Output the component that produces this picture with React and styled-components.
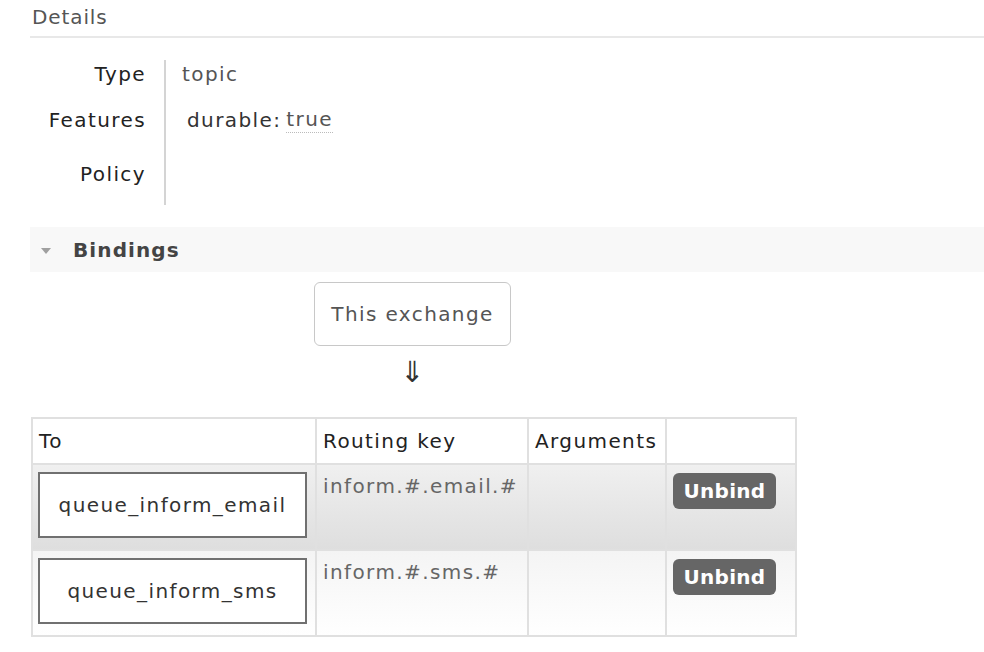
import React from 'react';
import styled, { createGlobalStyle } from 'styled-components';

const GlobalStyle = createGlobalStyle`
  html, body {
    margin: 0;
    padding: 0;
    background: #fff;
  }
  body {
    font-family: "DejaVu Sans", Verdana, sans-serif;
    font-size: 20px;
    letter-spacing: 1.4px;
    color: #333;
  }
`;

const Page = styled.div`
  padding-left: 30px;
  width: 954px;
`;

const Heading = styled.h2`
  margin: 0;
  height: 38px;
  padding: 5px 0 0 2px;
  box-sizing: border-box;
  font-size: 20px;
  letter-spacing: 0.9px;
  font-weight: normal;
  color: #555;
  border-bottom: 2px solid #e8e8e8;
`;

const Facts = styled.div`
  display: grid;
  grid-template-columns: 134px 2px auto;
  grid-template-rows: 28px 60px 57px;
  margin: 22px 0 0 0;
  width: 400px;
`;

const Label = styled.div`
  grid-column: 1;
  display: flex;
  align-items: center;
  justify-content: flex-end;
  padding-right: 18px;
  color: #222;
  padding-top: ${(p) => p.$top || 0}px;
  padding-bottom: ${(p) => p.$bottom || 0}px;
`;

const Divider = styled.div`
  grid-column: 2;
  grid-row: 1 / 4;
  background: #d4d4d4;
`;

const Value = styled.div`
  grid-column: 3;
  display: flex;
  align-items: center;
  color: #555;
  padding-left: ${(p) => p.$indent || 16}px;
  padding-top: ${(p) => p.$top || 0}px;
`;

const Key = styled.span`
  color: #333;
  margin-right: 5px;
`;

const Dotted = styled.span`
  color: #555;
  border-bottom: 1px dotted #bbb;
  line-height: 25px;
`;

const SectionBar = styled.div`
  margin-top: 22px;
  height: 45px;
  background: #f8f8f8;
  display: flex;
  align-items: center;
  padding-left: 11px;
  gap: 22px;
  font-weight: bold;
  letter-spacing: 1.1px;
  color: #444;
`;

const Triangle = styled.span`
  width: 0;
  height: 0;
  border-left: 5px solid transparent;
  border-right: 5px solid transparent;
  border-top: 6px solid #a0a0a0;
  margin-top: 2px;
`;

const Diagram = styled.div`
  display: flex;
  flex-direction: column;
  align-items: center;
  width: 765px;
  margin-top: 10px;
`;

const ExchangeBox = styled.div`
  width: 197px;
  height: 64px;
  box-sizing: border-box;
  border: 1px solid #c8c8c8;
  border-radius: 6px;
  display: flex;
  align-items: center;
  justify-content: center;
  color: #555;
`;

const Arrow = styled.div`
  font-size: 29px;
  line-height: 32px;
  height: 36px;
  margin-top: 10px;
  letter-spacing: 0;
  color: #333;
`;

const Table = styled.table`
  border-collapse: collapse;
  margin-left: 1px;
  margin-top: 25px;
`;

const Th = styled.th`
  border: 2px solid #e0e0e0;
  height: 46px;
  padding: 0 6px;
  text-align: left;
  font-weight: normal;
  color: #222;
  width: ${(p) => p.$w}px;
  box-sizing: border-box;
`;

const Row = styled.tr`
  background: ${(p) =>
    p.$alt
      ? 'linear-gradient(#f0f0f0, #dedede)'
      : 'linear-gradient(#f4f4f4, #ffffff)'};
`;

const Td = styled.td`
  border: 2px solid #e0e0e0;
  height: 86px;
  padding: 9px 6px;
  vertical-align: top;
  box-sizing: border-box;
  color: #666;
`;

const QueueCell = styled(Td)`
  padding: 7px 6px 0 5px;
`;

const QueueBox = styled.div`
  width: 269px;
  height: 66px;
  box-sizing: border-box;
  border: 2px solid #707070;
  background: #fff;
  display: flex;
  align-items: center;
  justify-content: center;
  color: #333;
`;

const ButtonCell = styled(Td)`
  padding-top: 8px;
`;

const UnbindButton = styled.button`
  font-family: inherit;
  font-size: 20px;
  letter-spacing: 0.3px;
  font-weight: bold;
  color: #fff;
  background: #666;
  border: none;
  border-radius: 6px;
  height: 36px;
  width: 103px;
  padding: 0;
  cursor: pointer;
`;

const bindings = [
  { queue: 'queue_inform_email', key: 'inform.#.email.#' },
  { queue: 'queue_inform_sms', key: 'inform.#.sms.#' },
];

export default function App() {
  return (
    <>
      <GlobalStyle />
      <Page>
        <Heading>Details</Heading>
        <Facts>
          <Label>Type</Label>
          <Divider />
          <Value>topic</Value>
          <Label $top={4}>Features</Label>
          <Value $indent={21} $top={4}>
            <Key>durable:</Key>
            <Dotted>true</Dotted>
          </Value>
          <Label $bottom={5}>Policy</Label>
          <Value />
        </Facts>

        <SectionBar>
          <Triangle />
          Bindings
        </SectionBar>

        <Diagram>
          <ExchangeBox>This exchange</ExchangeBox>
          <Arrow>⇓</Arrow>
        </Diagram>

        <Table>
          <thead>
            <tr>
              <Th $w={284}>To</Th>
              <Th $w={212}>Routing key</Th>
              <Th $w={138}>Arguments</Th>
              <Th $w={130}></Th>
            </tr>
          </thead>
          <tbody>
            {bindings.map((b, i) => (
              <Row key={b.queue} $alt={i === 0}>
                <QueueCell>
                  <QueueBox>{b.queue}</QueueBox>
                </QueueCell>
                <Td>{b.key}</Td>
                <Td></Td>
                <ButtonCell>
                  <UnbindButton>Unbind</UnbindButton>
                </ButtonCell>
              </Row>
            ))}
          </tbody>
        </Table>
      </Page>
    </>
  );
}
